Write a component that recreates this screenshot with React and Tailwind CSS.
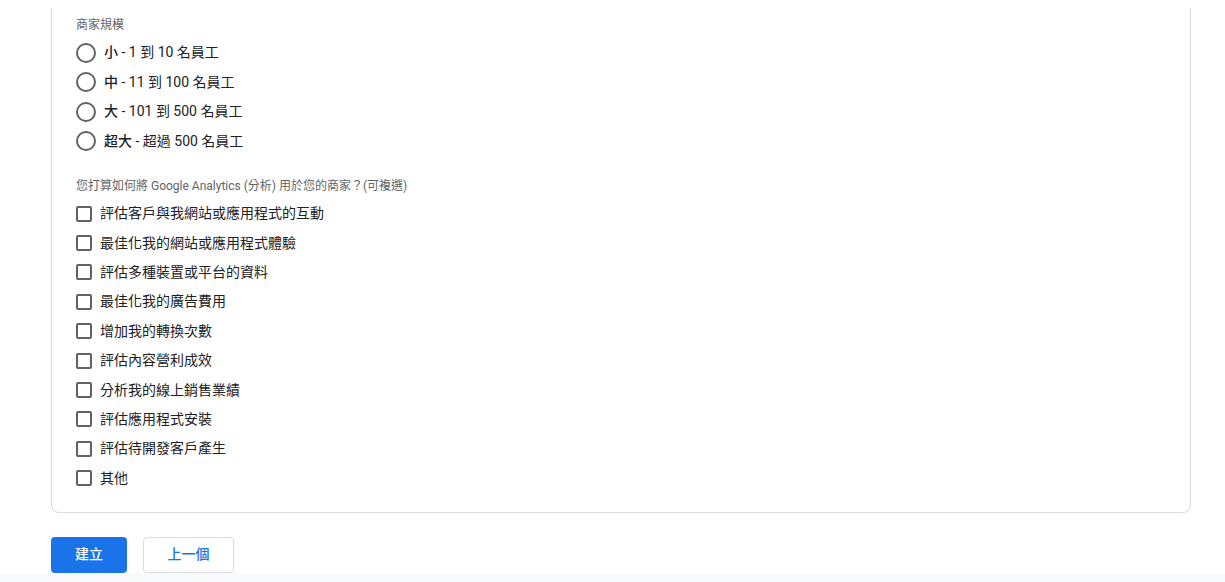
import React from 'react';

const sizes = [
  { head: '小', rest: ' - 1 到 10 名員工' },
  { head: '中', rest: ' - 11 到 100 名員工' },
  { head: '大', rest: ' - 101 到 500 名員工' },
  { head: '超大', rest: ' - 超過 500 名員工' },
];

const uses = [
  '評估客戶與我網站或應用程式的互動',
  '最佳化我的網站或應用程式體驗',
  '評估多種裝置或平台的資料',
  '最佳化我的廣告費用',
  '增加我的轉換次數',
  '評估內容營利成效',
  '分析我的線上銷售業績',
  '評估應用程式安裝',
  '評估待開發客戶產生',
  '其他',
];

const font = { fontFamily: 'Roboto, "Noto Sans CJK TC", sans-serif' };

const App = () => {
  return (
    <div className="w-[1225px] h-[582px] overflow-hidden bg-white flex flex-col pt-[8px]" style={font}>
      <div className="flex-1 px-[51px]">
        {/* Card - top edge is scrolled out of view */}
        <div className="border-x border-b border-[#dadce0] rounded-b-lg pl-[24px] pt-[9px] pb-[19px] w-[1140px]">
          <div className="text-[12px] leading-4 text-[#5f6368]">商家規模</div>
          <div className="mt-[5px]">
            {sizes.map((s) => (
              <label key={s.head} className="flex items-center h-[29.5px] gap-2 cursor-pointer">
                <span className="w-5 h-5 rounded-full border-2 border-[#5f6368] shrink-0" />
                <span className="text-[14px] text-[#202124]">
                  <span className="font-medium">{s.head}</span>
                  {s.rest}
                </span>
              </label>
            ))}
          </div>

          <div className="mt-[22px] text-[12px] leading-4 text-[#5f6368]">
            您打算如何將 Google Analytics (分析) 用於您的商家？(可複選)
          </div>
          <div className="mt-[5px]">
            {uses.map((u) => (
              <label key={u} className="flex items-center h-[29.4px] gap-2 cursor-pointer">
                <span className="w-4 h-4 rounded-[2px] border-2 border-[#5f6368] shrink-0" />
                <span className="text-[14px] text-[#202124]">{u}</span>
              </label>
            ))}
          </div>
        </div>

        <div className="flex gap-4 mt-[24px]">
          <button className="w-[76px] h-[36px] rounded bg-[#1a73e8] text-white text-[14px] font-medium">
            建立
          </button>
          <button className="w-[91px] h-[36px] rounded border border-[#dadce0] bg-white text-[#1a73e8] text-[14px] font-medium">
            上一個
          </button>
        </div>
      </div>
      <div className="h-[10px] bg-[#f8f9fa] shrink-0" />
    </div>
  );
};

export default App;
